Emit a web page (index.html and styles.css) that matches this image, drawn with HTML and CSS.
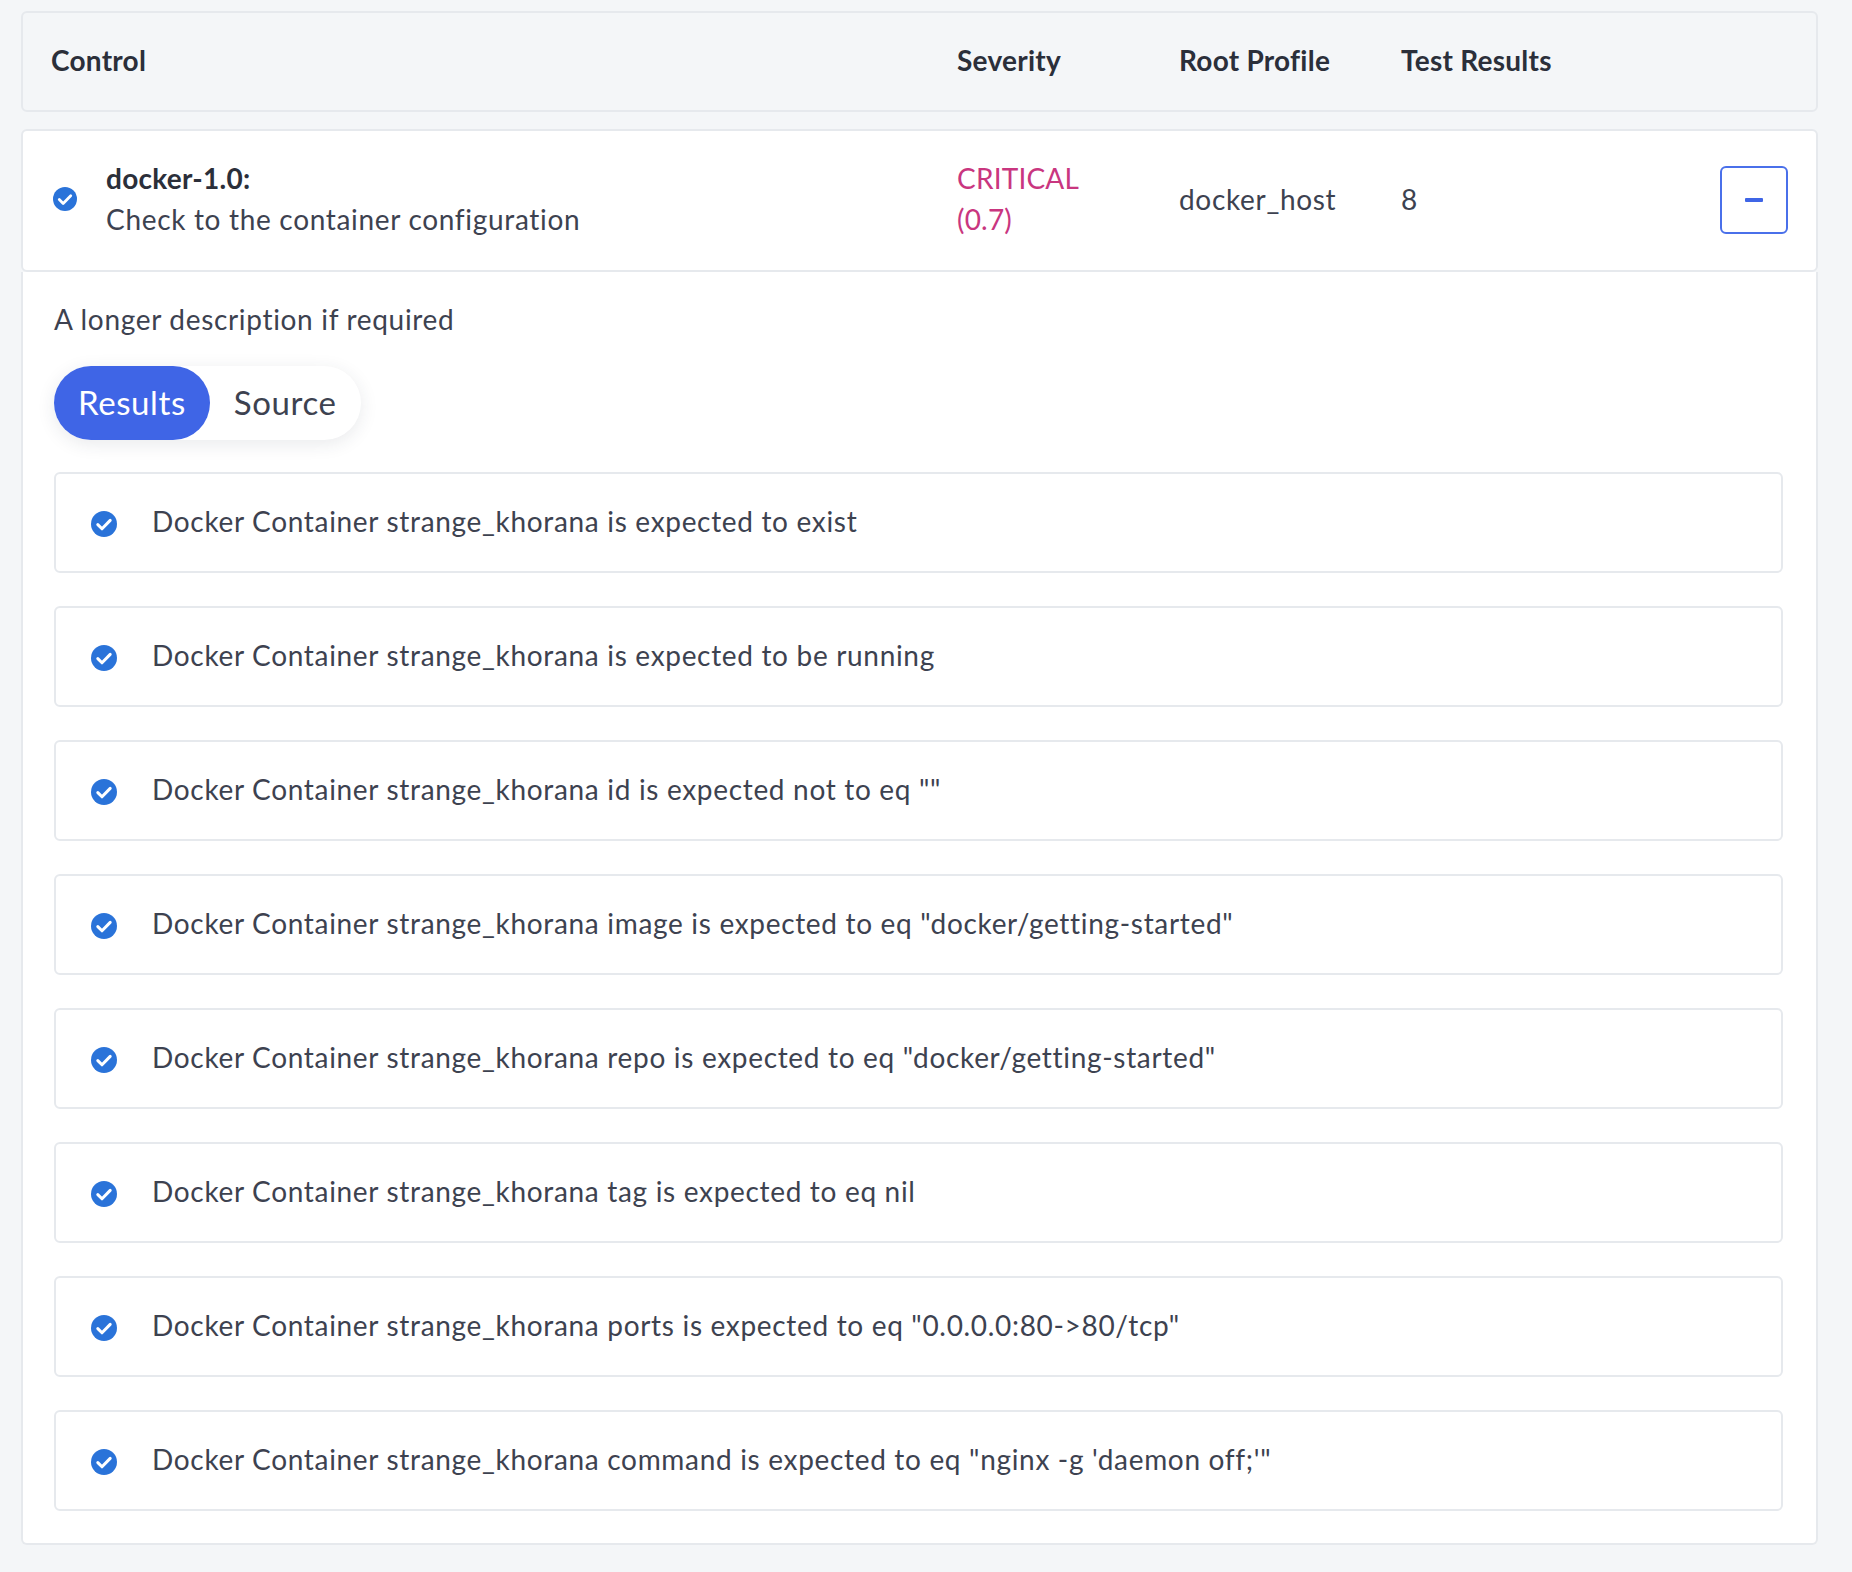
FILE: index.html
```html
<!DOCTYPE html>
<html lang="en">
<head>
<meta charset="utf-8">
<title>Control results</title>
<link rel="stylesheet" href="styles.css">
</head>
<body>
<svg class="defs" width="0" height="0" aria-hidden="true">
  <symbol id="check" viewBox="0 0 26 26">
    <circle cx="13" cy="13" r="13" fill="#2a73d9"/>
    <path d="M6.8 13.6l4.2 4.2 8.2-8.4" fill="none" stroke="#fff" stroke-width="3" stroke-linecap="round" stroke-linejoin="round"/>
  </symbol>
</svg>
<main class="page">
  <header class="table-row table-head">
    <div class="col-control">Control</div>
    <div>Severity</div>
    <div>Root Profile</div>
    <div>Test Results</div>
  </header>
  <section class="table-row control-row">
    <div class="col-control control-cell">
      <svg class="icon icon-sm"><use href="#check"/></svg>
      <div class="control-text">
        <div class="control-id">docker-1.0:</div>
        <div>Check to the container configuration</div>
      </div>
    </div>
    <div class="severity">CRITICAL<br>(0.7)</div>
    <div>docker_host</div>
    <div class="results-cell">
      <span>8</span>
      <button class="toggle" type="button" aria-label="Collapse"><span class="minus"></span></button>
    </div>
  </section>
  <section class="detail">
    <p class="description">A longer description if required</p>
    <div class="tabs">
      <button class="tab tab-active" type="button">Results</button>
      <button class="tab" type="button">Source</button>
    </div>
    <ul class="results">
      <li class="result"><svg class="icon result-icon"><use href="#check"/></svg><span class="result-text">Docker Container strange_khorana is expected to exist</span></li>
      <li class="result"><svg class="icon result-icon"><use href="#check"/></svg><span class="result-text">Docker Container strange_khorana is expected to be running</span></li>
      <li class="result"><svg class="icon result-icon"><use href="#check"/></svg><span class="result-text">Docker Container strange_khorana id is expected not to eq ""</span></li>
      <li class="result"><svg class="icon result-icon"><use href="#check"/></svg><span class="result-text">Docker Container strange_khorana image is expected to eq "docker/getting-started"</span></li>
      <li class="result"><svg class="icon result-icon"><use href="#check"/></svg><span class="result-text">Docker Container strange_khorana repo is expected to eq "docker/getting-started"</span></li>
      <li class="result"><svg class="icon result-icon"><use href="#check"/></svg><span class="result-text">Docker Container strange_khorana tag is expected to eq nil</span></li>
      <li class="result"><svg class="icon result-icon"><use href="#check"/></svg><span class="result-text">Docker Container strange_khorana ports is expected to eq "0.0.0.0:80-&gt;80/tcp"</span></li>
      <li class="result"><svg class="icon result-icon"><use href="#check"/></svg><span class="result-text">Docker Container strange_khorana command is expected to eq "nginx -g 'daemon off;'"</span></li>
    </ul>
  </section>
</main>
</body>
</html>
```
FILE: styles.css
```css
* { box-sizing: border-box; }
html, body { margin: 0; }
body {
  background: #f4f6f8;
  color: #3d4250;
  font-family: "Lato", "Open Sans", sans-serif;
  font-size: 28px;
  line-height: 41px;
  letter-spacing: .68px;
}
.defs { display: block; height: 0; }
.page { padding: 11px 34px 28px 21px; display: flex; flex-direction: column; gap: 17px; }
.table-row {
  display: grid;
  grid-template-columns: 906px 222px 222px 1fr;
  align-items: center;
  padding: 0 28px;
  border: 2px solid #e6e9ed;
  border-radius: 6px;
}
.table-head { height: 101px; font-weight: 700; color: #2b2f3a; padding-bottom: 3px; letter-spacing: .25px; }
.control-row { height: 143px; background: #fff; padding-bottom: 3px; }
.control-cell { display: flex; align-items: center; gap: 29px; padding-left: 2px; }
.control-id { font-weight: 700; color: #2b2f3a; letter-spacing: .25px; }
.severity { color: #c9367f; letter-spacing: .2px; }
.results-cell { display: flex; align-items: center; justify-content: space-between; }
.toggle {
  width: 68px; height: 68px; padding: 0; margin-top: 1px;
  display: flex; align-items: center; justify-content: center;
  background: #fff; border: 2px solid #4a70ea; border-radius: 6px;
}
.minus { width: 18px; height: 4px; background: #3f65e6; border-radius: 1px; }
.detail {
  margin-top: -17px;
  background: #fff;
  border: 2px solid #e6e9ed;
  border-top: 0;
  border-radius: 0 0 6px 6px;
  padding: 27px 33px 32px 31px;
}
.description { margin: 0 0 26px; }
.tabs {
  display: inline-flex;
  height: 74px;
  background: #fff;
  border-radius: 37px;
  box-shadow: 0 4px 18px rgba(40, 50, 70, .1);
  vertical-align: top;
}
.tab {
  border: 0; background: transparent; color: inherit;
  font: inherit; font-size: 33px; letter-spacing: .6px;
  padding: 0 24px 2px; border-radius: 37px;
}
.tab-active { background: #3f65e6; color: #fff; }
.results { list-style: none; margin: 32px 0 0; padding: 0; display: flex; flex-direction: column; gap: 33px; }
.result {
  height: 101px;
  display: flex; align-items: center; gap: 35px;
  padding: 0 35px;
  border: 2px solid #e6e9ed;
  border-radius: 6px;
}
.result-text { padding-bottom: 2px; }
.result-icon { margin-top: 2px; }
.icon { width: 26px; height: 26px; flex: none; }
.icon-sm { width: 24px; height: 24px; }
```
